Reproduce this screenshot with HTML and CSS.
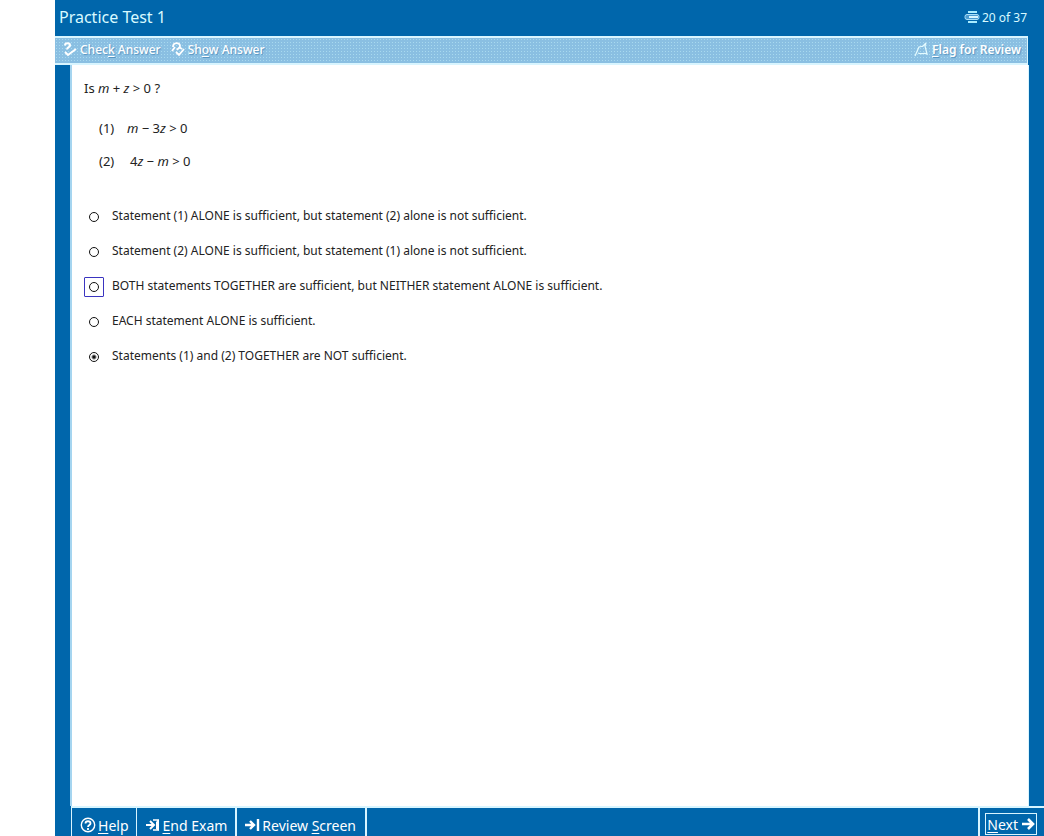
FILE: index.html
```html
<!DOCTYPE html>
<html lang="en">
<head>
<meta charset="utf-8">
<title>Practice Test 1</title>
<link rel="stylesheet" href="styles.css">
</head>
<body>
<div class="exam">
  <header class="header">
    <h1 class="title">Practice Test 1</h1>
    <div class="progress">
      <svg class="pages" width="16" height="12" viewBox="0 0 16 12"><path d="M4 1h9M4 11h9" stroke="#a9ecff" stroke-width="2"/><rect x="1" y="3.5" width="14" height="5" rx="2" fill="#4b9bd0" stroke="#a9dff8"/><path d="M5 6h9" stroke="#d8f6ff" stroke-width="2"/></svg>
      <span>20 of 37</span>
    </div>
  </header>
  <div class="toolbar">
    <button class="tool" type="button"><svg width="14" height="15" viewBox="0 0 14 15" fill="none" stroke="#fff" stroke-width="2"><path d="M2 3.5C2 .5 7 .5 7 3.5 7 5.500 4 5 4 7.500M2 10l3 3 8-6"/></svg><span>Chec<u>k</u> Answer</span></button>
    <button class="tool" type="button"><svg width="14" height="15" viewBox="0 0 14 15" fill="none" stroke="#fff" stroke-width="1.600"><path d="M2 5C2 0 9 0 9 4c0 2-2 2-3 4M4 5L1 9M5 10l3 3 5-6" stroke-width="1.800"/><path d="M8 5l3 2"/></svg><span>Sh<u>o</u>w Answer</span></button>
    <button class="tool flag" type="button"><svg width="15" height="15" viewBox="0 0 15 15" fill="none" stroke="#e4fbff" stroke-width="1.200"><path d="M1 14L5 5c2-1 3 0 4-1l3-3-1 3 2 8c-3-2-5 1-9-1"/></svg><span><u>F</u>lag for Review</span></button>
  </div>
  <div class="middle">
    <main class="question">
      <p class="stem">Is <i>m</i> + <i>z</i> &gt; 0 ?</p>
      <ol class="statements">
        <li><span class="num">(1)</span><span><i>m</i> − 3<i>z</i> &gt; 0</span></li>
        <li><span class="num wide">(2)</span><span>4<i>z</i> − <i>m</i> &gt; 0</span></li>
      </ol>
      <form class="choices">
        <label class="choice"><span class="mark"><input type="radio" name="answer"></span><span>Statement (1) ALONE is sufficient, but statement (2) alone is not sufficient.</span></label>
        <label class="choice"><span class="mark"><input type="radio" name="answer"></span><span>Statement (2) ALONE is sufficient, but statement (1) alone is not sufficient.</span></label>
        <label class="choice"><span class="mark focused"><input type="radio" name="answer"></span><span>BOTH statements TOGETHER are sufficient, but NEITHER statement ALONE is sufficient.</span></label>
        <label class="choice"><span class="mark"><input type="radio" name="answer"></span><span>EACH statement ALONE is sufficient.</span></label>
        <label class="choice"><span class="mark"><input type="radio" name="answer" checked></span><span>Statements (1) and (2) TOGETHER are NOT sufficient.</span></label>
      </form>
    </main>
  </div>
  <footer class="footer">
    <button class="nav help" type="button"><svg width="16" height="16" viewBox="0 0 16 16" fill="none" stroke="#fff"><circle cx="8" cy="8" r="6.700" stroke-width="1.400"/><path d="M5.500 6.500c0-3 5-3 5 0C10.500 8 8 8 8 10M8 11v2" stroke-width="1.800"/></svg><span><u>H</u>elp</span></button>
    <button class="nav end" type="button"><svg width="16" height="14" viewBox="0 0 16 14" fill="none" stroke="#fff" stroke-width="2"><path d="M1 7h7M5 3l4 4-4 4"/><path d="M8 2h5v10H8" stroke-width="1.500"/><path d="M11 4l3-3v12l-3-2z" fill="#fff" stroke="none"/></svg><span><u>E</u>nd Exam</span></button>
    <button class="nav review" type="button"><svg width="16" height="14" viewBox="0 0 16 14" fill="none" stroke="#fff" stroke-width="2.400"><path d="M1 7h8M6 3l4 4-4 4M14 1v12"/></svg><span>Review <u>S</u>creen</span></button>
    <div class="next-cell"><button class="nav next" type="button"><span><u>N</u>ext</span><svg width="13" height="12" viewBox="0 0 13 12" fill="none" stroke="#fff" stroke-width="2.600"><path d="M0 6h11M6 1l5 5-5 5"/></svg></button></div>
  </footer>
</div>
</body>
</html>
```
FILE: styles.css
```css
* { box-sizing: border-box; }
body { margin: 0; background: #fff; font-family: "Noto Sans", sans-serif; color: #222; }
button { font: inherit; color: inherit; background: none; border: 0; padding: 0; }
svg { flex: none; }
u { text-underline-offset: 2px; text-decoration-thickness: 1px; }
.exam { display: flex; flex-direction: column; height: 100vh; margin-left: 55px; background: #0066ab; overflow: hidden; }
.header { display: flex; justify-content: space-between; align-items: center; height: 36px; padding: 0 17px 2px 4px; color: #d9faff; flex: none; }
.title { margin: 0; font-size: 16px; font-weight: 400; }
.progress { display: flex; align-items: center; gap: 2px; font-size: 12px; }
.toolbar { display: flex; align-items: center; gap: 10px; height: 29px; flex: none; margin-right: 16px; padding: 0 6px 2px 8px; border: solid #d8f5ff; border-width: 2px 1px 2px 0; color: #fff; font-size: 12px; font-weight: 500; background-color: #8abfe2; background-image: radial-gradient(#a8d9ef 1px, transparent 1px); background-size: 3px 3px; }
.tool { display: flex; align-items: center; gap: 3px; text-shadow: 1px 1px 1px #5794c0; }
.flag { margin-left: auto; font-weight: 600; }
.middle { flex: 1; min-height: 0; border-right: 15px solid #0066ab; border-left: 15px solid #0066ab; }
.question { height: 100%; border-left: 2px solid #a5d5f0; border-right: 1px solid #d8f5ff; background: #fff; padding: 12px; font-size: 12px; line-height: 22px; }
.stem { margin: 0; font-size: 13px; }
.statements { list-style: none; margin: 12px 0 0; padding: 0 0 0 15px; font-size: 13px; }
.statements li { display: flex; height: 33px; padding-top: 6px; }
.num { width: 28px; }
.wide { width: 31px; }
.choices { margin-top: 21px; }
.choice { display: flex; align-items: center; height: 35px; gap: 8px; }
.mark { display: flex; width: 20px; height: 20px; align-items: center; justify-content: center; border: 1px solid transparent; margin-top: 3px; }
.focused { border-color: #3a34c0; border-radius: 1px; }
.choice input { appearance: none; width: 10px; height: 10px; margin: 0; border: 1px solid #111; border-radius: 50%; background: #fff; }
.choice input:checked { background: radial-gradient(circle, #111 1px, #fff 3px); }
.footer { display: flex; height: 30px; flex: none; margin-left: 16px; border-left: 1px solid #d8f5ff; border-top: 2px solid #d8f5ff; color: #fff; font-size: 14px; }
.nav { display: flex; align-items: center; gap: 2px; padding: 6px 8px 0; border-right: 2px solid #d8f5ff; }
.help { padding-right: 7px; border-right-width: 1px; }
.review { padding-left: 7px; padding-right: 9px; }
.next-cell { margin-left: auto; padding: 5px 7px 0 5px; border-left: 2px solid #d8f5ff; }
.next { border: 1px solid #d8f5ff; padding: 0 1px; height: 22px; gap: 4px; }
```
